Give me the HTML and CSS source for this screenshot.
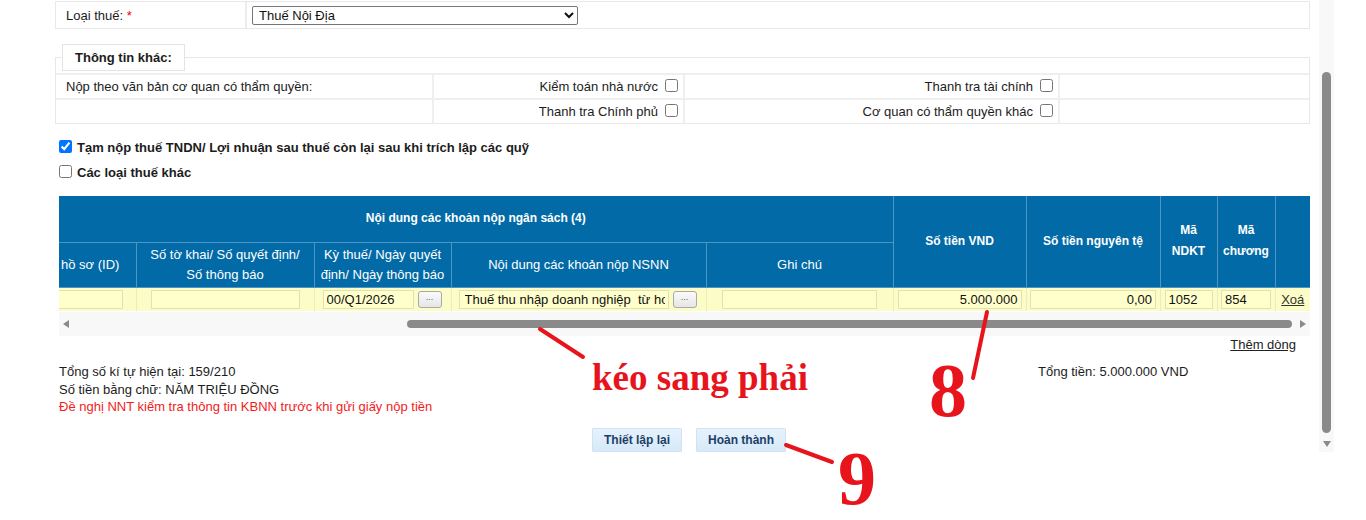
FILE: index.html
```html
<!DOCTYPE html>
<html lang="vi">
<head>
<meta charset="utf-8">
<title>Giấy nộp tiền</title>
<link rel="stylesheet" href="styles.css">
</head>
<body>
<div class="frame">
  <div class="content">
    <div class="tax-type">
      <div class="tt-label">Loại thuế:&nbsp;<span class="req">*</span></div>
      <div class="tt-field">
        <select class="tt-select"><option>Thuế Nội Địa</option></select>
      </div>
    </div>

    <fieldset class="other">
      <legend>Thông tin khác:</legend>
      <div class="other-grid">
        <div class="cell">Nộp theo văn bản cơ quan có thẩm quyền:</div>
        <div class="cell right">Kiểm toán nhà nước <input type="checkbox" class="cbx"></div>
        <div class="cell right">Thanh tra tài chính <input type="checkbox" class="cbx"></div>
        <div class="cell"></div>
        <div class="cell"></div>
        <div class="cell right">Thanh tra Chính phủ <input type="checkbox" class="cbx"></div>
        <div class="cell right">Cơ quan có thẩm quyền khác <input type="checkbox" class="cbx"></div>
        <div class="cell"></div>
      </div>
    </fieldset>

    <div class="section">
      <label class="check-line"><input type="checkbox" class="cbx-lead" checked>Tạm nộp thuế TNDN/ Lợi nhuận sau thuế còn lại sau khi trích lập các quỹ</label>
      <label class="check-line"><input type="checkbox" class="cbx-lead">Các loại thuế khác</label>

      <div class="grid-wrap">
        <table class="budget">
          <colgroup>
            <col class="w77"><col class="w178"><col class="w137"><col class="w255"><col class="w187">
            <col class="w133"><col class="w134"><col class="w57"><col class="w58"><col class="w35">
          </colgroup>
          <thead>
            <tr class="h1">
              <th colspan="5" class="bold">Nội dung các khoản nộp ngân sách (4)</th>
              <th rowspan="2" class="bold">Số tiền VND</th>
              <th rowspan="2" class="bold">Số tiền nguyên tệ</th>
              <th rowspan="2" class="bold">Mã<br>NDKT</th>
              <th rowspan="2" class="bold">Mã<br>chương</th>
              <th rowspan="2"></th>
            </tr>
            <tr class="h2">
              <th class="clip">hồ sơ (ID)</th>
              <th>Số tờ khai/ Số quyết định/<br>Số thông báo</th>
              <th>Kỳ thuế/ Ngày quyết<br>định/ Ngày thông báo</th>
              <th>Nội dung các khoản nộp NSNN</th>
              <th>Ghi chú</th>
            </tr>
          </thead>
          <tbody>
            <tr class="data">
              <td><input class="in in-id" type="text" value=""></td>
              <td class="c"><input class="in in-tk" type="text" value=""></td>
              <td><div class="pair"><input class="in in-ky" type="text" value="00/Q1/2026"><button class="dots">...</button></div></td>
              <td><div class="pair"><input class="in in-nd" type="text" value="Thuế thu nhập doanh nghiệp  từ hoạt động sản xuất kinh doanh"><button class="dots">...</button></div></td>
              <td class="c"><input class="in in-gc" type="text" value=""></td>
              <td class="c"><input class="in in-vnd num" type="text" value="5.000.000"></td>
              <td class="c"><input class="in in-nt num" type="text" value="0,00"></td>
              <td class="c"><input class="in in-ma" type="text" value="1052"></td>
              <td class="c"><input class="in in-ch" type="text" value="854"></td>
              <td class="c"><a class="del" href="#">Xoá</a></td>
            </tr>
          </tbody>
        </table>
        <div class="hscroll">
          <span class="arr-left"></span>
          <div class="htrack"><div class="hthumb"></div></div>
          <span class="arr-right"></span>
        </div>
      </div>

      <div class="add-row"><a href="#">Thêm dòng</a></div>

      <div class="summary">
        <div class="sum-left">
          <div>Tổng số kí tự hiện tại: 159/210</div>
          <div>Số tiền bằng chữ: NĂM TRIỆU ĐỒNG</div>
          <div class="warn">Đề nghị NNT kiểm tra thông tin KBNN trước khi gửi giấy nộp tiền</div>
        </div>
        <div class="sum-right">Tổng tiền: 5.000.000 VND</div>
      </div>

      <div class="actions">
        <button class="btn">Thiết lập lại</button>
        <button class="btn">Hoàn thành</button>
      </div>
    </div>
  </div>

  <div class="vscroll">
    <div class="vthumb"></div>
    <div class="arr-down"></div>
  </div>

  <svg class="marks" width="1366" height="520" viewBox="0 0 1366 520">
    <line x1="540" y1="329" x2="583" y2="357" />
    <line x1="987" y1="312" x2="973" y2="378" />
    <line x1="786" y1="445" x2="832" y2="462" />
  </svg>
  <div class="note note-drag">kéo sang phải</div>
  <div class="note note-8">8</div>
  <div class="note note-9">9</div>
</div>
</body>
</html>
```

FILE: styles.css
```css
* { box-sizing: border-box; }

body {
  margin: 0;
  font-family: "Liberation Sans", Arial, sans-serif;
  font-size: 13px;
  color: #1c1c1c;
  background: #fff;
}

.frame {
  position: relative;
  display: flex;
  width: 1366px;
  height: 520px;
  overflow: hidden;
}

.content {
  flex: none;
  width: 1310px;
  padding-left: 55px;
}

/* ---------- Loại thuế ---------- */
.tax-type {
  display: flex;
  height: 28px;
  margin-top: 1px;
  border: 1px solid #e9e9e9;
}
.tt-label {
  width: 191px;
  padding-left: 10px;
  display: flex;
  align-items: center;
  border-right: 2px solid #ececec;
}
.req { color: #e00; }
.tt-field {
  display: flex;
  align-items: center;
  padding-left: 5px;
}
.tt-select {
  width: 326px;
  height: 19px;
  font-family: "Liberation Sans", Arial, sans-serif;
  font-size: 13px;
  color: #111;
  border: 1px solid #767676;
  border-radius: 2px;
  background: #fff;
  padding: 0 2px;
}

/* ---------- Thông tin khác ---------- */
.other {
  margin: 15px 0 0;
  padding: 0;
  border: 1px solid #e8e8e8;
  min-width: 0;
}
.other legend {
  margin-left: 6px;
  padding: 0 12px;
  height: 27px;
  line-height: 25px;
  border: 1px solid #e4e4e4;
  font-weight: bold;
  background: #fff;
}
.other-grid {
  display: grid;
  grid-template-columns: 378px 251px 375px 1fr;
  grid-auto-rows: 25px;
  margin-top: 2px;
}
.cell {
  display: flex;
  align-items: center;
  padding-left: 10px;
  border-top: 2px solid #efefef;
  border-right: 2px solid #efefef;
}
.cell:nth-child(4n) { border-right: none; }
.cell.right {
  justify-content: flex-end;
  padding-right: 5px;
}
.cbx {
  width: 13px;
  height: 13px;
  margin: 0 0 2px 7px;
}

/* ---------- Section ---------- */
.section { padding-left: 4px; }

.check-line {
  display: flex;
  align-items: center;
  height: 25px;
  font-weight: bold;
}
.check-line:first-child { margin-top: 11px; }
.cbx-lead {
  width: 13px;
  height: 13px;
  margin: 0 5px 2px 0;
}

/* ---------- Table ---------- */
.grid-wrap { margin-top: 11px; }

.budget {
  width: 1251px;
  table-layout: fixed;
  border-collapse: collapse;
}
.w77 { width: 77px; }
.w178 { width: 178px; }
.w137 { width: 137px; }
.w255 { width: 255px; }
.w187 { width: 187px; }
.w133 { width: 133px; }
.w134 { width: 134px; }
.w57 { width: 57px; }
.w58 { width: 58px; }
.w35 { width: 35px; }

.budget th {
  background: #026aa6;
  color: #fff;
  font-weight: normal;
  font-size: 13px;
  line-height: 20px;
  border: 1px solid #4f94c6;
  padding: 0 2px;
  text-align: center;
}
.budget th.bold {
  font-weight: bold;
  font-size: 12px;
  line-height: 21px;
}
.budget tr.h1 th { border-top: none; }
.budget tr.h1 th:first-child { border-left: none; }
.budget tr.h2 th:first-child { border-left: none; }
.budget th:last-child { border-right: none; }
.budget th.clip { text-align: left; padding-left: 2px; }
.h1 { height: 46px; }
.h2 { height: 45px; }

.budget td {
  background: #fcfcc6;
  height: 24px;
  padding: 0;
  border-right: 1px solid #ecebc0;
}
.budget td:last-child { border-right: none; }
.budget td.c { text-align: center; }

.in {
  height: 19px;
  font-family: "Liberation Sans", Arial, sans-serif;
  font-size: 13px;
  color: #111;
  background: #ffffcc;
  border: 1px solid #e2e1b4;
  padding: 0 3px;
  vertical-align: middle;
}
.in.num { text-align: right; }
.in-id { width: 64px; border-left: none; }
.in-tk { width: 149px; }
.in-ky { width: 91px; margin-left: 8px; }
.in-nd { width: 210px; margin-left: 7px; padding-left: 5px; }
.in-gc { width: 155px; }
.in-vnd { width: 124px; }
.in-nt { width: 126px; }
.in-ma { width: 48px; text-align: left; }
.in-ch { width: 50px; text-align: left; }

.pair {
  display: flex;
  align-items: center;
  gap: 4px;
}
.dots {
  width: 24px;
  height: 17px;
  padding: 0 0 4px;
  font-size: 9px;
  line-height: 9px;
  color: #555;
  background: linear-gradient(#fafafa, #e6e6e6);
  border: 1px solid #a9a9a9;
  border-radius: 3px;
}
.del {
  color: #333;
  font-size: 13px;
  text-decoration: underline;
}

/* ---------- Horizontal scrollbar ---------- */
.hscroll {
  display: flex;
  align-items: center;
  width: 1251px;
  height: 24px;
  margin-top: 1px;
  background: #f8f8f8;
}
.arr-left {
  width: 0; height: 0;
  margin: 0 6px 0 4px;
  border-top: 4px solid transparent;
  border-bottom: 4px solid transparent;
  border-right: 6px solid #8a8a8a;
}
.arr-right {
  width: 0; height: 0;
  margin: 0 4px 0 6px;
  border-top: 4px solid transparent;
  border-bottom: 4px solid transparent;
  border-left: 6px solid #8a8a8a;
}
.htrack {
  flex: 1;
  display: flex;
  justify-content: flex-end;
}
.hthumb {
  width: 885px;
  height: 8px;
  margin-right: 2px;
  border-radius: 4px;
  background: #8a8a8a;
}

.add-row {
  display: flex;
  justify-content: flex-end;
  width: 1251px;
  padding-right: 14px;
  margin-top: 1px;
  line-height: 15px;
}
.add-row a { color: #222; text-decoration: underline; }

/* ---------- Summary ---------- */
.summary {
  display: flex;
  margin-top: 11px;
  line-height: 18px;
}
.sum-left { width: 979px; }
.warn { color: #f21c1c; line-height: 15px; }

.actions {
  display: flex;
  justify-content: center;
  gap: 14px;
  width: 1260px;
  margin-top: 14px;
}
.btn {
  height: 24px;
  padding: 0 11px;
  font-family: "Liberation Sans", Arial, sans-serif;
  font-size: 12px;
  font-weight: bold;
  color: #1b3f68;
  background: linear-gradient(#e6f2fc, #d6e9f8);
  border: 1px solid #cfe3f4;
  border-radius: 1px;
}

/* ---------- Vertical scrollbar ---------- */
.vscroll {
  flex: none;
  margin-left: 9px;
  width: 15px;
  height: 452px;
  background: #f8f8f8;
  display: flex;
  flex-direction: column;
  align-items: center;
  padding-top: 72px;
}
.vthumb {
  width: 9px;
  height: 361px;
  border-radius: 5px;
  background: #8a8a8a;
}
.arr-down {
  margin-top: 8px;
  width: 0; height: 0;
  border-left: 4px solid transparent;
  border-right: 4px solid transparent;
  border-top: 6px solid #8a8a8a;
}

/* ---------- Annotations (overlay) ---------- */
.marks {
  position: absolute;
  left: 0;
  top: 0;
  pointer-events: none;
}
.marks line {
  stroke: #e8141c;
  stroke-width: 4;
  stroke-linecap: round;
}
.note {
  position: absolute;
  color: #e8141c;
  font-family: "Liberation Serif", "Times New Roman", serif;
  font-weight: bold;
  line-height: 1;
}
.note-drag { left: 592px; top: 359px; font-size: 37px; }
.note-8 { left: 929px; top: 352px; font-size: 76px; }
.note-9 { left: 838px; top: 440px; font-size: 76px; }
```
